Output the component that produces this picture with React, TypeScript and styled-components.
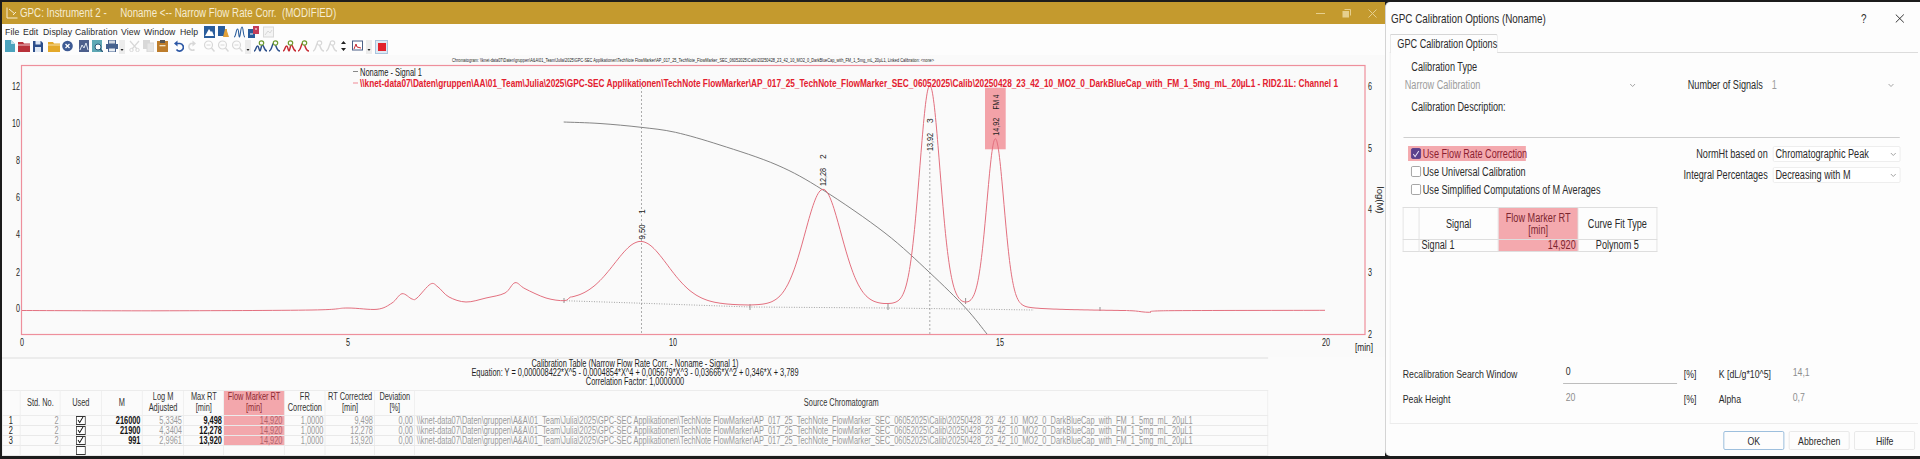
import React from "react";
import styled, { createGlobalStyle } from "styled-components";

const FONT = `"Liberation Sans", Arial, sans-serif`;

// the shot is squeezed sideways, so text blocks are drawn wider and scaled back
const K_TABLE = 0.74;
const K_DIALOG = 0.76;
const tx = (n: number) => n / K_TABLE;
const dx = (n: number) => n / K_DIALOG;

const GlobalStyle = createGlobalStyle`
  html, body { margin: 0; padding: 0; background: #1c1c1c; }
  * { box-sizing: border-box; }
`;

const Screen = styled.div`
  width: 1920px;
  height: 459px;
  padding: 2px 0 3px 2px;
  display: flex;
  overflow: hidden;
  font-family: ${FONT};
  color: #222;
`;

const MainWindow = styled.div`
  width: 1383px;
  flex: none;
  display: flex;
  flex-direction: column;
  background: #fbfbfb;
  overflow: hidden;
`;

const TitleBar = styled.div`
  height: 22px;
  flex: none;
  background: #c49a2e;
  display: flex;
  align-items: center;
  padding-left: 4px;
  color: #f6ecd2;
  white-space: pre;
`;

const TitleText = styled.span`
  margin-left: 2px;
  flex: 1;
  font-size: 12.5px;
  transform: scaleX(0.78);
  transform-origin: 0 50%;
`;

const WindowControls = styled.div`
  display: flex;
  align-items: center;
  gap: 17px;
  padding-right: 8px;
`;

const MenuRow = styled.div`
  height: 16px;
  flex: none;
  display: flex;
  align-items: center;
  padding-left: 3px;
  background: #fdfdfd;
`;

const MenuItem = styled.span<{ $w: number }>`
  width: ${(p) => p.$w}px;
  font-size: 8.7px;
  letter-spacing: 0.1px;
  color: #2a2a2a;
`;

const ToolRow = styled.div`
  height: 15px;
  flex: none;
  display: flex;
  align-items: flex-start;
  padding-left: 3px;
  background: #fdfdfd;
`;

const Tool = styled.span<{ $gap: number }>`
  display: flex;
  flex: none;
  margin-left: ${(p) => p.$gap}px;
`;

const StopButton = styled.span`
  width: 13px;
  height: 14px;
  margin-left: 3px;
  flex: none;
  display: flex;
  align-items: center;
  justify-content: center;
  border: 1px solid #a9c4de;
  background: #dfe9f3;
  &::after {
    content: "";
    width: 8px;
    height: 8px;
    background: #e2222c;
  }
`;

const ChartSvg = styled.svg`
  display: block;
  flex: none;
  width: 1383px;
  height: 302px;
  background: #fafafa;
`;

const LowerPanel = styled.div`
  flex: 1;
  width: ${tx(1383)}px;
  transform: scaleX(${K_TABLE});
  transform-origin: 0 0;
`;

const CalHeader = styled.div`
  height: 33px;
  padding-top: 0;
  border-top: 2px solid #ececec;
  text-align: center;
  font-size: 10px;
  line-height: 9px;
  width: ${tx(1266)}px;
  color: #1d1d1d;
`;

const Table = styled.table`
  border-collapse: collapse;
  table-layout: fixed;
  width: ${tx(1266)}px;
  font-size: 10px;
  border-top: 1px solid #e4e4e4;
  border-right: 1px solid #e4e4e4;
`;

const Th = styled.th<{ $hot?: boolean }>`
  height: 24.5px;
  padding: 0;
  font-weight: 400;
  line-height: 10.5px;
  color: ${(p) => (p.$hot ? "#8c2a33" : "#333")};
  background: ${(p) => (p.$hot ? "#f3a7ac" : "#fbfbfb")};
  border: 1px solid #ececec;
`;

const Td = styled.td<{ $hot?: boolean; $strong?: boolean; $left?: boolean }>`
  height: 10px;
  padding: 0 2px;
  line-height: 9px;
  white-space: nowrap;
  text-align: ${(p) => (p.$left ? "left" : "right")};
  color: ${(p) => (p.$strong ? "#111" : p.$hot ? "#b0636b" : "#9a9a9a")};
  font-weight: ${(p) => (p.$strong ? 700 : 400)};
  background: ${(p) => (p.$hot ? "#f3a7ac" : "transparent")};
  border: 1px solid #e9e9e9;
`;

const RowHead = styled.td`
  height: 10px;
  padding: 0 0 0 8px;
  line-height: 9px;
  color: #222;
  border: 1px solid #e9e9e9;
`;

const UsedCell = styled.td`
  height: 10px;
  padding: 0;
  line-height: 0;
  border: 1px solid #e9e9e9;
`;

const UsedBox = styled.span`
  display: flex;
  align-items: center;
  justify-content: center;
  width: ${tx(9)}px;
  height: 9px;
  margin: 0 auto;
  border: 1px solid #333;
  background: #fff;
  color: #111;
`;

const DialogFrame = styled.div`
  flex: 1;
  background: #fdfdfd;
  border-left: 1px solid #d4d4d4;
  border-radius: 5px 0 0 5px;
  overflow: hidden;
`;

const Dialog = styled.div`
  width: ${dx(535)}px;
  height: 100%;
  display: flex;
  flex-direction: column;
  font-size: 12px;
  color: #2b2b2b;
  white-space: nowrap;
  transform: scaleX(${K_DIALOG});
  transform-origin: 0 0;
`;

const DialogHead = styled.div`
  height: 32px;
  flex: none;
  display: flex;
  align-items: center;
  padding: 0 ${dx(16.5)}px 0 ${dx(5)}px;
`;

const DialogTitle = styled.span`
  flex: 1;
  font-size: 13px;
`;

const HelpMark = styled.span`
  font-size: 13px;
  margin-right: ${dx(29)}px;
`;

const TabBar = styled.div`
  height: 19px;
  flex: none;
  margin: 0 ${dx(3)}px 0 ${dx(3.6)}px;
  border-bottom: 1px solid #dcdcdc;
  display: flex;
`;

const Tab = styled.div`
  width: ${dx(108.4)}px;
  height: 19px;
  display: flex;
  align-items: center;
  padding-left: ${dx(7)}px;
  background: #fdfdfd;
  border: 1px solid #d6d6d6;
  border-bottom: none;
  border-radius: 2px 2px 0 0;
`;

const Pane = styled.div`
  height: 371px;
  flex: none;
  margin: 0 ${dx(3)}px 0 ${dx(3.6)}px;
  padding: 7px 0 0 ${dx(12.4)}px;
  border-left: 1px solid #ececec;
  border-bottom: 1px solid #ececec;
  display: flex;
  flex-direction: column;
`;

const FieldLabel = styled.div`
  height: 15px;
  padding-left: ${dx(8.6)}px;
  line-height: 15px;
`;

const TypeRow = styled.div`
  height: 18px;
  margin: 1px 0 6px;
  display: flex;
  align-items: center;
`;

const DisabledSelect = styled.div<{ $w: number; $pad: number }>`
  width: ${(p) => dx(p.$w)}px;
  flex: none;
  display: flex;
  align-items: center;
  justify-content: space-between;
  color: #9c9c9c;
  padding: 0 ${dx(2)}px 0 ${(p) => dx(p.$pad)}px;
`;

const RightLabel = styled.span<{ $w: number }>`
  width: ${(p) => dx(p.$w)}px;
  flex: none;
  text-align: right;
  padding-right: ${dx(5)}px;
`;

const Rule = styled.div`
  height: 1px;
  width: ${dx(496)}px;
  margin: 22px 0 8px ${dx(1)}px;
  background: #cfcfcf;
  flex: none;
`;

const OptionsRow = styled.div`
  display: flex;
  height: 61px;
  flex: none;
`;

const CheckColumn = styled.div`
  width: ${dx(235)}px;
  flex: none;
  display: flex;
  flex-direction: column;
`;

const CheckRow = styled.div<{ $hot?: boolean }>`
  height: 15px;
  margin-bottom: 3px;
  margin-left: ${dx(5.5)}px;
  padding-left: ${dx(2.5)}px;
  width: ${(p) => (p.$hot ? `${dx(117.5)}px` : "auto")};
  display: flex;
  align-items: center;
  gap: ${dx(2)}px;
  background: ${(p) => (p.$hot ? "#f4a9ae" : "transparent")};
  color: ${(p) => (p.$hot ? "#8c2030" : "inherit")};
`;

const CheckBox = styled.span<{ $on?: boolean }>`
  width: ${dx(10)}px;
  height: 11px;
  flex: none;
  border-radius: 2px;
  display: flex;
  align-items: center;
  justify-content: center;
  border: 1px solid ${(p) => (p.$on ? "#5b3f8c" : "#9a9a9a")};
  background: ${(p) => (p.$on ? "#5b3f8c" : "#fff")};
`;

const SelectColumn = styled.div`
  display: flex;
  flex-direction: column;
  gap: 5px;
`;

const SelectRow = styled.div`
  display: flex;
  align-items: center;
  height: 16px;
`;

const SelectBox = styled.div`
  width: ${dx(128)}px;
  height: 16px;
  flex: none;
  display: flex;
  align-items: center;
  justify-content: space-between;
  padding: 0 ${dx(3)}px 0 ${dx(2)}px;
  border: 1px solid #ececec;
  border-radius: 2px;
  background: #fff;
`;

const SignalTable = styled.table`
  border-collapse: collapse;
  table-layout: fixed;
  width: ${dx(253.5)}px;
  font-size: 12px;
`;

const SignalTh = styled.th<{ $hot?: boolean }>`
  height: 32px;
  padding: 0;
  font-weight: 400;
  line-height: 12px;
  background: ${(p) => (p.$hot ? "#f4a9ae" : "#fdfdfd")};
  color: ${(p) => (p.$hot ? "#7c2630" : "#2b2b2b")};
  border: 1px solid #dedede;
`;

const SignalTd = styled.td<{ $hot?: boolean; $align?: string }>`
  height: 12px;
  padding: 0 ${dx(2)}px;
  line-height: 11px;
  text-align: ${(p) => p.$align ?? "left"};
  background: ${(p) => (p.$hot ? "#f4a9ae" : "transparent")};
  color: ${(p) => (p.$hot ? "#7c2630" : "#2b2b2b")};
  border: 1px solid #dedede;
`;

const BottomGrid = styled.div`
  margin-top: auto;
  margin-bottom: 12px;
  display: grid;
  grid-template-columns: ${dx(160)}px ${dx(121)}px ${dx(35)}px ${dx(71)}px ${dx(60)}px;
  grid-auto-rows: 25px;
  align-items: center;
  font-size: 11.5px;
`;

const Muted = styled.span`
  color: #8d8d8d;
  padding: 0 0 4px ${dx(3)}px;
`;

const NumberInput = styled.span`
  height: 20px;
  width: ${dx(114)}px;
  margin-top: 1px;
  padding: 0 0 0 ${dx(3)}px;
  line-height: 15px;
  border-bottom: 1px solid #bdbdbd;
`;

const Footer = styled.div`
  flex: 1;
  display: flex;
  justify-content: flex-end;
  gap: ${dx(5)}px;
  padding: 7px ${dx(6)}px 0 0;
`;

const DlgButton = styled.div<{ $primary?: boolean }>`
  width: ${dx(60.5)}px;
  height: 19px;
  display: flex;
  align-items: center;
  justify-content: center;
  background: #fdfdfd;
  border: 1px solid ${(p) => (p.$primary ? "#8fb6d8" : "#e6e6e6")};
  border-radius: 2px;
  font-size: 11.5px;
`;

// left part of the trace, read off by hand, in screen px
const leftTrace: [number, number][] = [
  [22, 310.5], [160, 310.8], [312, 310], [347, 308], [377, 309.3], [392, 303], [402, 293.7], [412, 299],
  [417, 298], [430.6, 284], [438, 287], [449, 297], [466, 302], [486, 298], [505, 293], [515, 282.7],
  [525, 288.7], [546, 298], [564, 300.7],
];

const rightTrace: [number, number][] = [
  [1135.5, 311], [1149.7, 312.3], [1168.6, 310.7], [1325, 310.3],
];

const calibration: [number, number][] = [
  [563.7, 122], [600, 123.5], [641, 127.3], [675.4, 132.3], [720, 145], [777, 165], [823, 190], [885, 233],
  [929.8, 272.7], [965.6, 308], [987, 334],
];

const baseline: [number, number][] = [
  [564, 300.7], [641, 303.2], [750, 307], [888, 308], [966, 309], [1034, 310], [1136, 311],
];

const baseAt = (x: number) => {
  for (let i = 0; i < baseline.length - 1; i++) {
    const [x0, y0] = baseline[i];
    const [x1, y1] = baseline[i + 1];
    if (x <= x1) return y0 + ((y1 - y0) * (x - x0)) / (x1 - x0);
  }
  return 311;
};

const gpcPeaks = [
  { c: 641, top: 241.7, s: 28, g: 30 },
  { c: 823, top: 190, s: 19, g: 20 },
  { c: 929.8, top: 86.7, s: 10.5, g: 12 },
  { c: 995.4, top: 140, s: 8.8, g: 10 },
];

// main peaks as gauss + a bit of lorentz tail
const peakTrace = () => {
  const pts: [number, number][] = [];
  for (let x = 570; x < 1130; x += 2) {
    let y = baseAt(x);
    for (const p of gpcPeaks) {
      const h = baseAt(p.c) - p.top;
      const d = x - p.c;
      y -= h * (0.86 * Math.exp(-(d * d) / (2 * p.s * p.s)) + 0.14 / (1 + (d * d) / (p.g * p.g)));
    }
    pts.push([x, +y.toFixed(1)]);
  }
  return pts;
};

const signal = [...leftTrace, ...peakTrace(), ...rightTrace];

// catmull-rom through the points
function smooth(pts: [number, number][]) {
  let d = `M${pts[0][0]} ${pts[0][1]}`;
  for (let i = 0; i < pts.length - 1; i++) {
    const a = pts[Math.max(i - 1, 0)];
    const b = pts[i];
    const c = pts[i + 1];
    const e = pts[Math.min(i + 2, pts.length - 1)];
    const c1x = b[0] + (c[0] - a[0]) / 6;
    const c1y = b[1] + (c[1] - a[1]) / 6;
    const c2x = c[0] - (e[0] - b[0]) / 6;
    const c2y = c[1] - (e[1] - b[1]) / 6;
    d += ` C${c1x.toFixed(1)} ${c1y.toFixed(1)} ${c2x.toFixed(1)} ${c2y.toFixed(1)} ${c[0]} ${c[1]}`;
  }
  return d;
}

const SOURCE =
  "\\\\knet-data07\\Daten\\gruppen\\A&A\\01_Team\\Julia\\2025\\GPC-SEC Applikationen\\TechNote FlowMarker\\AP_017_25_TechNote_FlowMarker_SEC_06052025\\Calib\\20250428_23_42_10_MO2_0_DarkBlueCap_with_FM_1_5mg_mL_20µL1";

const LEGEND =
  "\\\\knet-data07\\Daten\\gruppen\\AA\\01_Team\\Julia\\2025\\GPC-SEC Applikationen\\TechNote FlowMarker\\AP_017_25_TechNote_FlowMarker_SEC_06052025\\Calib\\20250428_23_42_10_MO2_0_DarkBlueCap_with_FM_1_5mg_mL_20µL1 - RID2.1L: Channel 1";

const peaks = [
  { x: 641.5, y: 232, len: 15, value: "9,50", tagY: 211.7, tag: "1" },
  { x: 823, y: 177, len: 18, value: "12,28", tagY: 156.7, tag: "2" },
  { x: 930, y: 142, len: 18, value: "13,92", tagY: 120.7, tag: "3" },
];

const leftTicks = [
  ["12", 86], ["10", 123.3], ["8", 160.7], ["6", 197.7], ["4", 234], ["2", 272], ["0", 308],
] as const;
const rightTicks = [
  ["6", 86], ["5", 148], ["4", 209], ["3", 272], ["2", 334],
] as const;
const bottomTicks = [
  ["0", 22], ["5", 348], ["10", 673], ["15", 1000], ["20", 1326],
] as const;

function Chart() {
  return (
    <ChartSvg viewBox="2 55 1383 302">
      <g fontFamily={FONT} fill="#222">
        <text transform="translate(452 62) scale(0.765 1)" fontSize="5" textLength="630" lengthAdjust="spacingAndGlyphs">
          {"Chromatogram: \\\\knet-data07\\Daten\\gruppen\\A&A\\01_Team\\Julia\\2025\\GPC-SEC Applikationen\\TechNote FlowMarker\\AP_017_25_TechNote_FlowMarker_SEC_06052025\\Calib\\20250428_23_42_10_MO2_0_DarkBlueCap_with_FM_1_5mg_mL_20µL1, Linked Calibration: <none>"}
        </text>
        {leftTicks.map(([t, y]) => (
          <text key={t} x={20 - t.length * 4} y={y + 3.5} fontSize="10.5" textLength={t.length * 4} lengthAdjust="spacingAndGlyphs">{t}</text>
        ))}
        {rightTicks.map(([t, y]) => (
          <text key={t} x="1368" y={y + 3.5} fontSize="10.5" textLength="4" lengthAdjust="spacingAndGlyphs">{t}</text>
        ))}
        {bottomTicks.map(([t, x]) => (
          <text key={t} x={x - t.length * 2} y="345.5" fontSize="10.5" textLength={t.length * 4} lengthAdjust="spacingAndGlyphs">{t}</text>
        ))}
        <text x="1355" y="350.5" fontSize="10.5" textLength="18" lengthAdjust="spacingAndGlyphs">[min]</text>
        <text transform="translate(1376.500 200) rotate(90)" fontSize="9.5" textAnchor="middle">log(M)</text>
      </g>

      <rect x="21.5" y="65.5" width="1343.5" height="269" fill="none" stroke="#ee8f9c" strokeWidth="1.2" />

      <rect x="985" y="87.7" width="20.7" height="61.6" fill="#f3a2a8" />
      <path d={smooth(calibration)} fill="none" stroke="#777" strokeWidth="0.9" />
      <path d="M564 300.7L641 303.2L750 307L888 308L965.6 309L1034 310" fill="none" stroke="#999" strokeWidth="0.9" strokeDasharray="1 1.5" />
      <path d="M641.500 83V334M929.800 152V334" fill="none" stroke="#8a8a8a" strokeWidth="0.7" strokeDasharray="2 2" />
      <path d="M564 298V303M750 304V310M888 304V310M965.600 298V304M1100 307V311" fill="none" stroke="#666" strokeWidth="0.7" />
      <path d={smooth(signal)} fill="none" stroke="#e3707f" strokeWidth="1" />

      <g fontFamily={FONT}>
        <path d="M353 71.500h5" stroke="#888" strokeWidth="1" />
        <text transform="translate(360 75.500) scale(0.76 1)" fontSize="11" fill="#222" textLength="81.600" lengthAdjust="spacingAndGlyphs">Noname - Signal 1</text>
        <path d="M353 83h5" stroke="#f08a95" strokeWidth="1" />
        <text transform="translate(360 87) scale(0.739 1)" fontSize="11" fontWeight="700" fill="#e3202f" textLength="1323.400" lengthAdjust="spacingAndGlyphs">{LEGEND}</text>
      </g>

      <g fontFamily={FONT} fontSize="8.5" fill="#222">
        {peaks.map((p) => (
          <g key={p.tag}>
            <text transform={`translate(${p.x + 3} ${p.y}) rotate(-90)`} textAnchor="middle" textLength={p.len} lengthAdjust="spacingAndGlyphs">{p.value}</text>
            <text transform={`translate(${p.x + 3} ${p.tagY}) rotate(-90)`} textAnchor="middle">{p.tag}</text>
          </g>
        ))}
        <text transform="translate(998.500 126.700) rotate(-90)" textAnchor="middle" textLength="18" lengthAdjust="spacingAndGlyphs">14,92</text>
        <text transform="translate(998.500 102) rotate(-90)" textAnchor="middle" textLength="15" lengthAdjust="spacingAndGlyphs">FM 4</text>
      </g>
    </ChartSvg>
  );
}

// toolbar drawings
const Ico = ({ w = 12, children }: { w?: number; children: React.ReactNode }) => (
  <svg width={w} height="12" viewBox={`0 0 ${w} 12`}>{children}</svg>
);

const NAVY = "#2d4f8b";
const OFF = "#d8d8d8";

const DropDot = () => (
  <svg width="6" height="14" viewBox="0 0 6 14">
    <rect width="6" height="14" fill="#ececec" />
    <path d="M1.500 9h3L3 11z" fill="#222" />
  </svg>
);

const PeakIcon = ({ color, on, multi }: { color: string; on: boolean; multi?: boolean }) => (
  <svg width="13" height="12" viewBox="0 0 13 12">
    <path
      d={multi ? "M0 11C2 11 2 6 3.500 6S5 11 6 11 7 5 8.500 5 10 11 13 11" : "M1 11C4 11 4 3 6 3S8 11 12 11"}
      fill="none"
      stroke={on ? color : OFF}
      strokeWidth="1.5"
    />
    <circle cx="7.5" cy="3" r="2.2" fill="#fff" stroke={on ? "#6d9a2e" : OFF} strokeWidth="1.2" />
  </svg>
);

const Lens = () => (
  <Ico>
    <circle cx="5.5" cy="5" r="4" fill="none" stroke={OFF} strokeWidth="1.2" />
    <path d="M8.500 8l3 3.500" stroke={OFF} strokeWidth="1.5" />
    <path d="M3.500 5h4" stroke={OFF} />
  </Ico>
);

function Toolbar() {
  return (
    <ToolRow>
      <Tool $gap={0}><Ico w={10}><path d="M0 0h6l4 4v8H0z" fill="#4ba3bd" /><path d="M6 0v4h4" fill="#bfe0ea" /></Ico></Tool>
      <Tool $gap={3}><Ico><path d="M0 2h5l1 1.500h6V12H0z" fill="#b8323a" /><path d="M0 5h12" stroke="#f0c9cc" /></Ico></Tool>
      <Tool $gap={3}><Ico w={10}><path d="M0 1h8l2 2v9H0z" fill={NAVY} /><rect x="2.5" y="1" width="5" height="3.5" fill="#dfe8f4" /><rect x="2" y="7" width="6" height="5" fill="#dfe8f4" /></Ico></Tool>
      <Tool $gap={5}><Ico><path d="M0 2h5l1 1.500h6V12H0z" fill="#e4a92a" /><path d="M0 5h12" stroke="#f6dfa4" /></Ico></Tool>
      <Tool $gap={2}><Ico w={11}><circle cx="5.5" cy="6" r="5.3" fill="#3d5a94" /><path d="M3.500 4l4 4M7.500 4l-4 4" stroke="#fff" strokeWidth="1.3" /></Ico></Tool>
      <Tool $gap={6}><Ico w={10}><rect width="10" height="12" fill="#4c5f8c" /><path d="M1 10l2-5 2 3 2-5 2 7" fill="none" stroke="#dce4f0" /></Ico></Tool>
      <Tool $gap={3}><Ico w={11}><rect width="10" height="12" fill="#5fa9b5" /><circle cx="6" cy="7" r="3" fill="#fff" stroke="#2d5a7a" /><path d="M8 9l3 3" stroke="#2d5a7a" strokeWidth="1.3" /></Ico></Tool>
      <Tool $gap={3}><Ico><rect x="2.5" y="0" width="7" height="4" fill="#cfd6e0" stroke="#45618e" /><rect y="4" width="12" height="5" fill="#45618e" /><rect x="2.5" y="8" width="7" height="4" fill="#e8edf3" stroke="#45618e" /></Ico></Tool>
      <Tool $gap={1}><DropDot /></Tool>
      <Tool $gap={4}><Ico w={11}><path d="M1 1l7 8M10 1L3 9" stroke={OFF} strokeWidth="1.2" /><circle cx="2.5" cy="10" r="1.7" fill="none" stroke={OFF} /><circle cx="8.5" cy="10" r="1.7" fill="none" stroke={OFF} /></Ico></Tool>
      <Tool $gap={3}><Ico w={11}><rect width="7" height="9" fill={OFF} /><rect x="4" y="3" width="7" height="9" fill="#e6e6e6" stroke={OFF} /></Ico></Tool>
      <Tool $gap={3}><Ico w={11}><rect y="1" width="11" height="11" fill="#bd7d2c" /><rect x="3" width="5" height="3" fill="#555" /><rect x="2.5" y="5" width="6" height="1.3" fill="#f1e4c8" /></Ico></Tool>
      <Tool $gap={5}><Ico w={11}><path d="M3 3.500h4a3.800 3.800 0 1 1-3.500 6" fill="none" stroke="#2c57a5" strokeWidth="1.7" /><path d="M4.500 0.500L1 3.500l3.500 3z" fill="#2c57a5" /></Ico></Tool>
      <Tool $gap={3}><Ico w={10}><path d="M7 3.500H4a3.500 3.500 0 1 0 3.500 6" fill="none" stroke={OFF} strokeWidth="1.6" /><path d="M5.500 0.500L9 3.500l-3.500 3z" fill={OFF} /></Ico></Tool>
      <Tool $gap={6}><Lens /></Tool>
      <Tool $gap={2}><Lens /></Tool>
      <Tool $gap={2}><Lens /></Tool>
      <Tool $gap={2}><DropDot /></Tool>
      <Tool $gap={3}><PeakIcon color={NAVY} on multi /></Tool>
      <Tool $gap={1}><PeakIcon color={NAVY} on /></Tool>
      <Tool $gap={2}><PeakIcon color="#c62b33" on multi /></Tool>
      <Tool $gap={1}><PeakIcon color="#c62b33" on /></Tool>
      <Tool $gap={2}><PeakIcon color={OFF} on={false} /></Tool>
      <Tool $gap={0}><PeakIcon color={OFF} on={false} /></Tool>
      <Tool $gap={2}><Ico w={7}><path d="M3.500 1L6 4H1zM3.500 11L1 8h5z" fill="#222" /></Ico></Tool>
      <Tool $gap={5}><Ico w={11}><rect x="0.5" y="1" width="10" height="9" fill="#fff" stroke="#4a5f85" /><path d="M2 9l2-5 1 3 4 1" fill="none" stroke="#c62b33" /></Ico></Tool>
      <Tool $gap={3}><DropDot /></Tool>
      <StopButton />
    </ToolRow>
  );
}

const MenuIcons = () => (
  <>
    <Tool $gap={2}><Ico w={11}><rect width="11" height="12" fill="#2a5d9c" /><path d="M1 10l4-7 2 3 1-1 2 5z" fill="#fff" /></Ico></Tool>
    <Tool $gap={3}><Ico w={11}><rect width="7" height="10" fill="#2a5d9c" /><path d="M7 3h2v2l2 6H5z" fill="#e2a13a" /></Ico></Tool>
    <Tool $gap={5}><Ico w={11}><path d="M0 11C2 11 2 3 3.500 3S4.500 11 5.500 11 6.500 1 8 1 9 11 11 11" fill="none" stroke="#2a5d9c" strokeWidth="1.1" /></Ico></Tool>
    <Tool $gap={3}><Ico w={11}><rect y="3" width="7" height="9" fill="#2a5d9c" /><rect x="5" width="6" height="8" fill="#c43d58" /><path d="M2 8h3M7 3h2" stroke="#fff" /></Ico></Tool>
    <Tool $gap={4}><Ico w={11}><rect x="0.5" y="1" width="10" height="10" fill="#f4f4f4" stroke={OFF} /><path d="M2 9l3-4 2 2 2-3" fill="none" stroke={OFF} /></Ico></Tool>
  </>
);

const Chevron = () => (
  <svg width="9" height="5" viewBox="0 0 7 5" preserveAspectRatio="none">
    <path d="M1 1l2.500 2.500L6 1" fill="none" stroke="#9a9a9a" strokeWidth="0.9" />
  </svg>
);

const Tick = ({ color }: { color: string }) => (
  <svg width="11" height="8" viewBox="0 0 9 8" preserveAspectRatio="none">
    <path d="M1.500 4l2 2.500L7.500 1" fill="none" stroke={color} strokeWidth="1.1" />
  </svg>
);

const colWidths = [18, 40, 41, 41, 41.5, 40, 60.5, 41, 49.5, 40, 853];
const headers = ["", "Std. No.", "Used", "M", "Log M\nAdjusted", "Max RT\n[min]", "Flow Marker RT\n[min]", "FR\nCorrection", "RT Corrected\n[min]", "Deviation\n[%]", "Source Chromatogram"];

const rows = [
  { no: "1", m: "216000", log: "5,3345", rt: "9,498" },
  { no: "2", m: "21900", log: "4,3404", rt: "12,278" },
  { no: "3", m: "991", log: "2,9961", rt: "13,920" },
];

const Multi = ({ text }: { text: string }) => (
  <>
    {text.split("\n").map((line) => (
      <div key={line}>{line}</div>
    ))}
  </>
);

function CalibrationTable() {
  return (
    <Table>
      <colgroup>
        {colWidths.map((w, i) => (
          <col key={i} style={{ width: tx(w) }} />
        ))}
      </colgroup>
      <thead>
        <tr>
          {headers.map((h, i) => (
            <Th key={i} $hot={i === 6}><Multi text={h} /></Th>
          ))}
        </tr>
      </thead>
      <tbody>
        {rows.map((r) => (
          <tr key={r.no}>
            <RowHead>{r.no}</RowHead>
            <Td>2</Td>
            <UsedCell><UsedBox><Tick color="#111" /></UsedBox></UsedCell>
            <Td $strong>{r.m}</Td>
            <Td>{r.log}</Td>
            <Td $strong>{r.rt}</Td>
            <Td $hot>14,920</Td>
            <Td>1,0000</Td>
            <Td>{r.rt}</Td>
            <Td>0,00</Td>
            <Td $left>{SOURCE}</Td>
          </tr>
        ))}
        <tr>
          <RowHead />
          <Td />
          <UsedCell><UsedBox /></UsedCell>
          <Td /><Td /><Td /><Td /><Td /><Td /><Td /><Td />
        </tr>
      </tbody>
    </Table>
  );
}

function OptionsDialog() {
  return (
    <DialogFrame>
      <Dialog>
        <DialogHead>
          <DialogTitle>GPC Calibration Options (Noname)</DialogTitle>
          <HelpMark>?</HelpMark>
          <svg width="12" height="9" viewBox="0 0 9 9" preserveAspectRatio="none">
            <path d="M0.500 0.500l8 8M8.500 0.500l-8 8" stroke="#222" strokeWidth="0.9" />
          </svg>
        </DialogHead>
        <TabBar>
          <Tab>GPC Calibration Options</Tab>
        </TabBar>
        <Pane>
          <FieldLabel>Calibration Type</FieldLabel>
          <TypeRow>
            <DisabledSelect $w={235} $pad={2}>Narrow Calibration<Chevron /></DisabledSelect>
            <RightLabel $w={130}>Number of Signals</RightLabel>
            <DisabledSelect $w={129} $pad={4}>1<Chevron /></DisabledSelect>
          </TypeRow>
          <FieldLabel>Calibration Description:</FieldLabel>
          <Rule />
          <OptionsRow>
            <CheckColumn>
              <CheckRow $hot><CheckBox $on><Tick color="#e8dff5" /></CheckBox>Use Flow Rate Correction</CheckRow>
              <CheckRow><CheckBox />Use Universal Calibration</CheckRow>
              <CheckRow><CheckBox />Use Simplified Computations of M Averages</CheckRow>
            </CheckColumn>
            <SelectColumn>
              <SelectRow>
                <RightLabel $w={135}>NormHt based on</RightLabel>
                <SelectBox>Chromatographic Peak<Chevron /></SelectBox>
              </SelectRow>
              <SelectRow>
                <RightLabel $w={135}>Integral Percentages</RightLabel>
                <SelectBox>Decreasing with M<Chevron /></SelectBox>
              </SelectRow>
            </SelectColumn>
          </OptionsRow>
          <SignalTable>
            <colgroup>
              <col style={{ width: dx(16) }} />
              <col style={{ width: dx(79) }} />
              <col style={{ width: dx(80) }} />
              <col style={{ width: dx(78.5) }} />
            </colgroup>
            <thead>
              <tr>
                <SignalTh />
                <SignalTh>Signal</SignalTh>
                <SignalTh $hot>Flow Marker RT<br />[min]</SignalTh>
                <SignalTh>Curve Fit Type</SignalTh>
              </tr>
            </thead>
            <tbody>
              <tr>
                <SignalTd />
                <SignalTd>Signal 1</SignalTd>
                <SignalTd $hot $align="right">14,920</SignalTd>
                <SignalTd $align="center">Polynom 5</SignalTd>
              </tr>
            </tbody>
          </SignalTable>
          <BottomGrid>
            <span>Recalibration Search Window</span>
            <NumberInput>0</NumberInput>
            <span>[%]</span>
            <span>K [dL/g*10^5]</span>
            <Muted>14,1</Muted>
            <span>Peak Height</span>
            <Muted>20</Muted>
            <span>[%]</span>
            <span>Alpha</span>
            <Muted>0,7</Muted>
          </BottomGrid>
        </Pane>
        <Footer>
          <DlgButton $primary>OK</DlgButton>
          <DlgButton>Abbrechen</DlgButton>
          <DlgButton>Hilfe</DlgButton>
        </Footer>
      </Dialog>
    </DialogFrame>
  );
}

const menus: [string, number][] = [
  ["File", 18], ["Edit", 20], ["Display", 32], ["Calibration", 46], ["View", 23], ["Window", 36], ["Help", 22],
];

export default function App() {
  return (
    <>
      <GlobalStyle />
      <Screen>
        <MainWindow>
          <TitleBar>
            <svg width="12" height="12" viewBox="0 0 12 12">
              <path d="M1 0.500V11H11.500M3 2l6 5M7 8l3-3" fill="none" stroke="#f6ecd2" strokeWidth="1" />
            </svg>
            <TitleText>{"GPC: Instrument 2 -     Noname <-- Narrow Flow Rate Corr.  (MODIFIED)"}</TitleText>
            <WindowControls>
              <svg width="9" height="9" viewBox="0 0 9 9"><path d="M0 4.500h9" stroke="#e6cf8e" /></svg>
              <svg width="9" height="9" viewBox="0 0 9 9"><rect x="0.500" y="2" width="6.500" height="6.500" fill="#e6cf8e" /><path d="M2.500 0.500h6v6" fill="none" stroke="#e6cf8e" /></svg>
              <svg width="9" height="9" viewBox="0 0 9 9"><path d="M0.500 0.500l8 8M8.500 0.500l-8 8" stroke="#e6cf8e" /></svg>
            </WindowControls>
          </TitleBar>
          <MenuRow>
            {menus.map(([m, w]) => (
              <MenuItem key={m} $w={w}>{m}</MenuItem>
            ))}
            <MenuIcons />
          </MenuRow>
          <Toolbar />
          <Chart />
          <LowerPanel>
            <CalHeader>
              <div>Calibration Table (Narrow Flow Rate Corr. - Noname - Signal 1)</div>
              <div>Equation: Y = 0,000008422*X^5 - 0,0004854*X^4 + 0,005679*X^3 - 0,03666*X^2 + 0,346*X + 3,789</div>
              <div>Correlation Factor: 1,0000000</div>
            </CalHeader>
            <CalibrationTable />
          </LowerPanel>
        </MainWindow>
        <OptionsDialog />
      </Screen>
    </>
  );
}
